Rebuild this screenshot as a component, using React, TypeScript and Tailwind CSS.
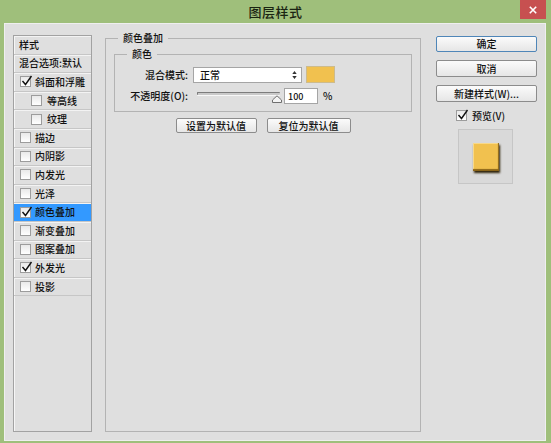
import React from "react"

type Row = {
  label: string
  box?: boolean
  checked?: boolean
  indent?: boolean
  selected?: boolean
}

const ROWS: Row[] = [
  { label: "样式" },
  { label: "混合选项:默认" },
  { label: "斜面和浮雕", box: true, checked: true },
  { label: "等高线", box: true, indent: true },
  { label: "纹理", box: true, indent: true },
  { label: "描边", box: true },
  { label: "内阴影", box: true },
  { label: "内发光", box: true },
  { label: "光泽", box: true },
  { label: "颜色叠加", box: true, checked: true, selected: true },
  { label: "渐变叠加", box: true },
  { label: "图案叠加", box: true },
  { label: "外发光", box: true, checked: true },
  { label: "投影", box: true },
]

function Check({ checked }: { checked?: boolean }) {
  return (
    <span className="relative flex h-[11px] w-[11px] shrink-0 border border-[#9c9c9c] bg-linear-to-b from-[#e9e9e9] to-[#ffffff]">
      {checked && (
        <svg viewBox="0 0 12 12" className="absolute -top-[2px] left-[0px] h-[12px] w-[12px]">
          <path d="M1.5 6 L4.5 9.5 L10.5 1" fill="none" stroke="#111111" strokeWidth="1.4" />
        </svg>
      )}
    </span>
  )
}

function Btn({ label, primary, w, h }: { label: string; primary?: boolean; w: string; h: string }) {
  return (
    <div
      className={`flex ${w} ${h} items-center justify-center rounded-[2px] border bg-linear-to-b from-[#fbfbfb] to-[#e6e6e6] text-[10px] leading-none text-[#111111] ${
        primary ? "border-[#4f86b8]" : "border-[#8c8c8c]"
      }`}
    >
      {label}
    </div>
  )
}

export default function App() {
  return (
    <div className="flex h-[443px] w-[551px] flex-col bg-[#9fbf7b] font-['Noto_Sans_CJK_SC','Noto_Sans',sans-serif] font-medium text-[#111111]">
      {/* Title bar */}
      <div className="relative flex h-[23px] shrink-0 items-center justify-center">
        <span className="text-[13px] leading-none tracking-[0.5px] text-[#1a2412]">图层样式</span>
        <div className="absolute right-[5px] top-0 flex h-[19px] w-[26px] items-center justify-center bg-[#c75050]">
          <svg viewBox="0 0 10 10" className="h-[8px] w-[8px]">
            <path d="M1 1 L9 9 M9 1 L1 9" stroke="#ffffff" strokeWidth="2" />
          </svg>
        </div>
      </div>

      {/* Dialog body */}
      <div className="ml-[4px] flex h-[418px] w-[542px] border border-[#efefef] bg-[#dfdfdf] pl-[8px] pr-[8px] pt-[9px]">
        {/* Style list */}
        <div className="mt-[2px] flex h-[397px] w-[79px] shrink-0 flex-col border border-[#a2a2a2] shadow-[inset_1px_1px_0_#f6f6f6]">
          {ROWS.map((r) => (
            <div
              key={r.label}
              className={`flex h-[18.6px] shrink-0 items-center border-b border-[#c6c6c6] shadow-[inset_0_1px_0_#f3f3f3] text-[10px] leading-none ${
                r.selected ? "bg-[#3399ff]" : ""
              } ${r.box ? (r.indent ? "gap-[5px] pl-[17px]" : "gap-[4px] pl-[6px]") : "pl-[5px]"}`}
            >
              {r.box && <Check checked={r.checked} />}
              <span>{r.label}</span>
            </div>
          ))}
        </div>

        {/* Color overlay group */}
        <fieldset className="ml-[13px] h-[399px] w-[316px] shrink-0 border border-[#b3b3b3] px-[8px]">
          <legend className="ml-[4px] px-[5px] text-[10px] leading-[10px]">颜色叠加</legend>

          <fieldset className="mt-[6px] border border-[#b3b3b3] pb-[7px]">
            <legend className="ml-[12px] px-[5px] text-[10px] leading-[10px]">颜色</legend>

            <div className="mt-[7px] flex h-[17px] items-center text-[10px] leading-none">
              <span className="w-[73px] text-right">混合模式:</span>
              <div className="ml-[5px] flex h-[16px] w-[109px] items-center justify-between border border-[#a5a5a5] bg-white pl-[6px] pr-[4px]">
                <span>正常</span>
                <svg viewBox="0 0 5 9" className="h-[8px] w-[5px]">
                  <path d="M0 3.5 L2.5 0 L5 3.5 Z M0 5.5 L2.5 9 L5 5.5 Z" fill="#333333" />
                </svg>
              </div>
              <div className="ml-[4px] h-[17px] w-[29px] border border-[#cdbb8c] bg-[#f1c14f]" />
            </div>

            <div className="mt-[5px] flex h-[16px] items-center text-[10px] leading-none">
              <span className="w-[73px] text-right">不透明度(O):</span>
              <div className="ml-[9px] flex h-[16px] w-[85px] flex-col">
                <div className="mt-[4px] h-[3px] w-[83px] rounded-[1px] border-t border-l border-[#7c7c7c] bg-[#c9c9c9] shadow-[0_1px_0_#f7f7f7]" />
                <svg viewBox="0 0 10 8" className="ml-[75px] h-[8px] w-[10px]">
                  <path d="M0.5 7.5 L0.5 5 L5 0.8 L9.5 5 L9.5 7.5 Z" fill="#f4f4f4" stroke="#6f6f6f" strokeWidth="1" />
                </svg>
              </div>
              <div className="ml-[2px] flex h-[16px] w-[34px] items-center border border-[#a5a5a5] bg-white pl-[3px] text-[9px]">
                100
              </div>
              <span className="ml-[5px]">%</span>
            </div>
          </fieldset>

          <div className="mt-[6px] flex justify-center gap-[10px]">
            <Btn label="设置为默认值" w="w-[81px]" h="h-[15px]" />
            <Btn label="复位为默认值" w="w-[84px]" h="h-[15px]" />
          </div>
        </fieldset>

        {/* Right column */}
        <div className="ml-[15px] mt-[3px] flex w-[101px] shrink-0 flex-col">
          <Btn label="确定" primary w="w-[101px]" h="h-[16px]" />
          <div className="mt-[8px]">
            <Btn label="取消" w="w-[101px]" h="h-[17px]" />
          </div>
          <div className="mt-[8px]">
            <Btn label="新建样式(W)..." w="w-[101px]" h="h-[17px]" />
          </div>
          <div className="mt-[8px] flex items-center gap-[5px] pl-[20px] text-[10px] leading-none">
            <Check checked />
            <span>预览(V)</span>
          </div>
          <div className="ml-[22px] mt-[8px] flex h-[55px] w-[55px] items-center justify-center border border-[#c6c6c6] bg-[#d9d9d9]">
            <div className="h-[28px] w-[26px] bg-[#f1c14f] shadow-[inset_-1px_-2px_1px_#8a6418,inset_1px_1px_0_#f8d98a,1px_2px_2px_#2e2208]" />
          </div>
        </div>
      </div>
    </div>
  )
}
